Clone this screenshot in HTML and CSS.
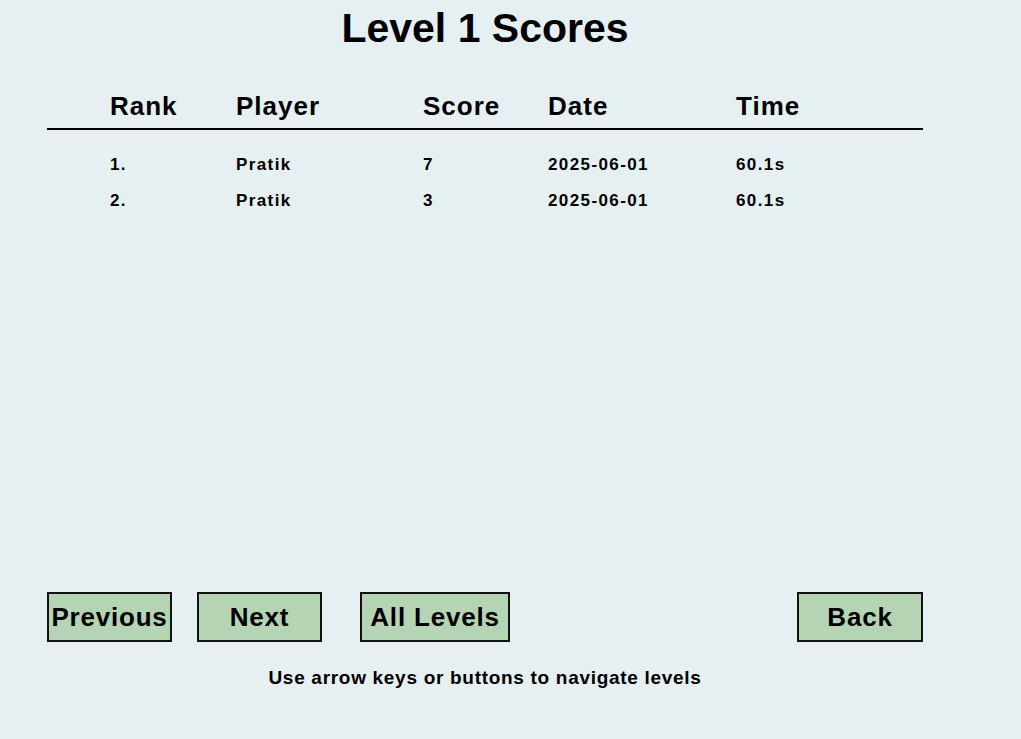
FILE: index.html
```html
<!DOCTYPE html>
<html>
<head>
<meta charset="utf-8">
<link rel="stylesheet" href="styles.css">
</head>
<body>
<main class="screen">
  <h1 class="title">Level 1 Scores</h1>
  <div class="table">
    <div class="row head">
      <span>Rank</span><span>Player</span><span>Score</span><span>Date</span><span>Time</span>
    </div>
    <div class="rule"></div>
    <div class="rows">
      <div class="row data">
        <span>1.</span><span>Pratik</span><span>7</span><span>2025-06-01</span><span>60.1s</span>
      </div>
      <div class="row data">
        <span>2.</span><span>Pratik</span><span>3</span><span>2025-06-01</span><span>60.1s</span>
      </div>
    </div>
  </div>
  <div class="buttons">
    <button class="btn prev">Previous</button>
    <button class="btn next">Next</button>
    <button class="btn all">All Levels</button>
    <button class="btn back">Back</button>
  </div>
  <p class="hint">Use arrow keys or buttons to navigate levels</p>
</main>
</body>
</html>
```
FILE: styles.css
```css
html, body {
  margin: 0;
  padding: 0;
  background: #e6eff1;
}
body {
  font-family: "Liberation Sans", Arial, sans-serif;
  font-weight: bold;
  color: #000;
}
.screen {
  box-sizing: border-box;
  width: 1021px;
  height: 739px;
  padding: 0 98px 0 47px;
  display: flex;
  flex-direction: column;
}
.title {
  margin: 4px 0 0 0;
  font-size: 41px;
  line-height: 48px;
  text-align: center;
}
.table {
  flex: 1;
  display: flex;
  flex-direction: column;
}
.row {
  display: grid;
  grid-template-columns: 126px 187px 125px 188px 1fr;
  padding-left: 63px;
}
.head {
  margin-top: 39px;
  font-size: 26px;
  line-height: 30px;
  letter-spacing: 1px;
}
.rule {
  height: 2px;
  background: #000;
  margin-top: 7px;
}
.rows {
  margin-top: 25px;
  display: flex;
  flex-direction: column;
}
.data {
  font-size: 17px;
  line-height: 20px;
  height: 36px;
  letter-spacing: 1.4px;
}
.buttons {
  display: flex;
  align-items: center;
}
.btn {
  box-sizing: border-box;
  height: 50px;
  border: 2px solid #111;
  background: #b4d4b4;
  font-family: "Liberation Sans", Arial, sans-serif;
  font-weight: bold;
  font-size: 26px;
  letter-spacing: 0.8px;
  color: #000;
  padding: 0;
}
.prev { width: 125px; }
.next { width: 125px; margin-left: 25px; }
.all { width: 150px; margin-left: 38px; }
.back { width: 126px; margin-left: auto; }
.hint {
  margin: 25px 0 50px 0;
  font-size: 19px;
  line-height: 22px;
  text-align: center;
  letter-spacing: 0.7px;
}
```
